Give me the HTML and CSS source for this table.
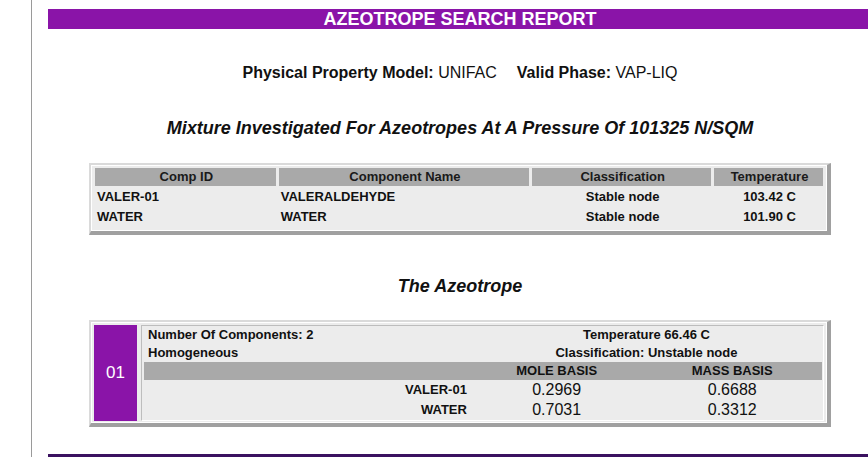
FILE: index.html
```html
<!DOCTYPE html>
<html>
<head>
<meta charset="utf-8">
<link rel="stylesheet" href="styles.css">
</head>
<body>
<div class="page">
  <div class="rail"></div>
  <div class="content">
    <div class="banner">AZEOTROPE SEARCH REPORT</div>
    <div class="props"><b>Physical Property Model:</b> UNIFAC<span class="sep"></span><b>Valid Phase:</b> VAP-LIQ</div>
    <h2 class="title t-mix">Mixture Investigated For Azeotropes At A Pressure Of 101325 N/SQM</h2>
    <div class="frame f1">
      <table class="grid">
        <tr class="head">
          <th class="c1">Comp ID</th>
          <th class="c2">Component Name</th>
          <th class="c3">Classification</th>
          <th class="c4">Temperature</th>
        </tr>
        <tr>
          <td>VALER-01</td>
          <td>VALERALDEHYDE</td>
          <td class="ctr">Stable node</td>
          <td class="ctr">103.42 C</td>
        </tr>
        <tr>
          <td>WATER</td>
          <td>WATER</td>
          <td class="ctr">Stable node</td>
          <td class="ctr">101.90 C</td>
        </tr>
      </table>
    </div>
    <h2 class="title t-az">The Azeotrope</h2>
    <div class="frame f2">
      <div class="az">
        <div class="num">01</div>
        <div class="inner">
          <table class="detail">
            <tr>
              <td class="d1 bold">Number Of Components: 2</td>
              <td colspan="2" class="ctr bold">Temperature 66.46 C</td>
            </tr>
            <tr>
              <td class="d1 bold">Homogeneous</td>
              <td colspan="2" class="ctr bold">Classification: Unstable node</td>
            </tr>
            <tr class="head">
              <td class="d1"></td>
              <td class="d2 ctr bold">MOLE BASIS</td>
              <td class="d3 ctr bold">MASS BASIS</td>
            </tr>
            <tr class="val">
              <td class="d1 rgt bold">VALER-01</td>
              <td class="ctr">0.2969</td>
              <td class="ctr">0.6688</td>
            </tr>
            <tr class="val">
              <td class="d1 rgt bold">WATER</td>
              <td class="ctr">0.7031</td>
              <td class="ctr">0.3312</td>
            </tr>
          </table>
        </div>
      </div>
    </div>
    <div class="footline"></div>
  </div>
</div>
</body>
</html>
```
FILE: styles.css
```css
html, body {
  margin: 0;
  padding: 0;
  background: #ffffff;
  overflow: hidden;
}
body {
  font-family: "Liberation Sans", Arial, sans-serif;
  color: #111111;
}
.page {
  display: flex;
  width: 900px;
  height: 457px;
}
.rail {
  width: 31px;
  border-right: 1px solid #9a9a9a;
  flex: none;
}
.content {
  flex: none;
  width: 824px;
  margin-left: 16px;
  display: flex;
  flex-direction: column;
  align-items: center;
}
.content > * { flex: none; }
.banner {
  align-self: stretch;
  margin-top: 9px;
  height: 20px;
  line-height: 21px;
  background: #8a14a8;
  color: #ffffff;
  font-weight: bold;
  font-size: 18px;
  text-align: center;
}
.props {
  margin-top: 34px;
  font-size: 16px;
  line-height: 20px;
  color: #111;
}
.props b { font-weight: bold; }
.sep { display: inline-block; width: 20px; }
.title {
  margin: 0;
  font-size: 18px;
  font-weight: bold;
  font-style: italic;
  line-height: 20px;
  color: #111;
}
.t-mix { margin-top: 35px; }
.t-az { margin-top: 41px; }

.frame {
  width: 734px;
  border-style: solid;
  border-width: 2px 4px 4px 2px;
  border-color: #dadada #a0a0a0 #a0a0a0 #dadada;
  background: #ffffff;
  padding: 1px;
}
.f1 { margin-top: 25px; }
.f2 { margin-top: 24px; }

.grid {
  width: 100%;
  background: #ececec;
  border-collapse: separate;
  border-spacing: 3px 2px;
  font-size: 13px;
  font-weight: bold;
  padding-bottom: 2px;
}
.grid th, .grid td {
  padding: 0 0 0 2px;
  height: 18px;
  line-height: 18px;
  text-align: left;
  white-space: nowrap;
}
.grid .head th {
  background: #a9a9a9;
  text-align: center;
  color: #1a1a1a;
}
.c1 { width: 179px; }
.c2 { width: 249px; }
.c3 { width: 177px; }
.c4 { width: 107px; }
.ctr { text-align: center !important; }
.rgt { text-align: right !important; }
.bold { font-weight: bold; }

.az {
  display: flex;
  background: #ececec;
  padding: 2px 2px 1px 2px;
  gap: 4px;
}
.num {
  flex: none;
  width: 43px;
  background: #8a14a8;
  color: #ffffff;
  font-size: 17px;
  display: flex;
  align-items: center;
  justify-content: center;
}
.inner {
  flex: 1;
  border: 1px solid #bdbdbd;
  border-right-color: #ffffff;
  border-bottom-color: #ffffff;
  padding: 0 1px 0 2px;
  background: #ececec;
}
.detail {
  width: 100%;
  border-collapse: collapse;
  font-size: 13px;
}
.detail td {
  padding: 0 4px;
  height: 18px;
  line-height: 18px;
  white-space: nowrap;
  text-align: left;
}
.detail .head td {
  background: #a9a9a9;
  font-size: 13px;
}
.detail .val td { height: 20px; line-height: 20px; }
.detail .val td.ctr { font-size: 16px; font-weight: normal; }
.d1 { width: 316px; }
.d2 { width: 162px; }
.d3 { width: 170px; }

.footline {
  align-self: stretch;
  margin-top: 27px;
  height: 4px;
  background: #3b1260;
}
```
